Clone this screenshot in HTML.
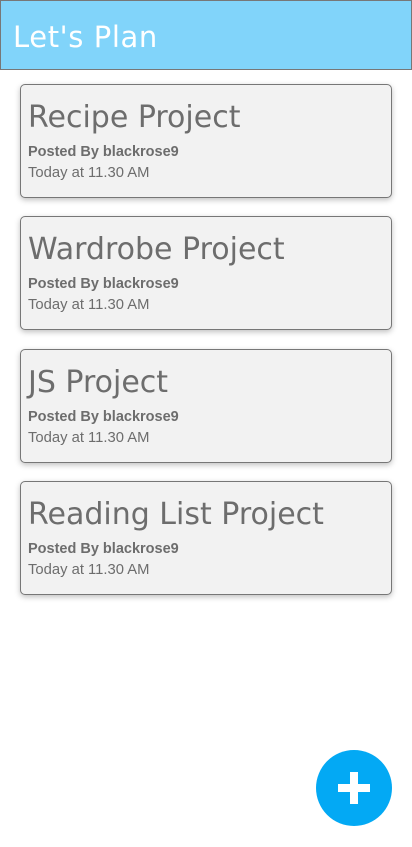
<!DOCTYPE html>
<html><head><style>
body{margin:0;width:412px;height:847px;background:#fff;position:relative;overflow:hidden;font-family:"Liberation Sans",sans-serif}
.hd{position:absolute;left:0;top:0;width:410px;height:68px;background:#81d4fa;border:1px solid #777}
.hd span{position:absolute;left:12px;top:19px;font-family:"Comic Sans MS","DejaVu Sans",sans-serif;font-size:29px;color:#fff;letter-spacing:0.6px}
.card{position:absolute;left:20px;width:370px;height:112px;background:#f2f2f2;border:1px solid #777;border-radius:5px;box-shadow:0 2px 6px rgba(0,0,0,.25)}
.t{position:absolute;left:7px;top:15px;font-family:"Comic Sans MS","DejaVu Sans",sans-serif;font-size:30px;color:#6d6d6d;white-space:nowrap}
.p{position:absolute;left:7px;top:59px;font-size:14.5px;font-weight:bold;color:#6d6d6d}
.d{position:absolute;left:7px;top:80px;font-size:14.8px;color:#6d6d6d}
.fab{position:absolute;left:316px;top:750px;width:76px;height:76px;border-radius:50%;background:#03a9f4}
.fab:before{content:"";position:absolute;left:22px;top:34px;width:32px;height:8px;background:#fff}
.fab:after{content:"";position:absolute;left:34px;top:22px;width:8px;height:32px;background:#fff}
</style></head><body>
<div class="hd"><span>Let's Plan</span></div>
<div class="card" style="top:84px"><div class="t">Recipe Project</div><div class="p">Posted By blackrose9</div><div class="d">Today at 11.30 AM</div></div>
<div class="card" style="top:216px"><div class="t">Wardrobe Project</div><div class="p">Posted By blackrose9</div><div class="d">Today at 11.30 AM</div></div>
<div class="card" style="top:349px"><div class="t">JS Project</div><div class="p">Posted By blackrose9</div><div class="d">Today at 11.30 AM</div></div>
<div class="card" style="top:481px"><div class="t">Reading List Project</div><div class="p">Posted By blackrose9</div><div class="d">Today at 11.30 AM</div></div>
<div class="fab"></div>
</body></html>
